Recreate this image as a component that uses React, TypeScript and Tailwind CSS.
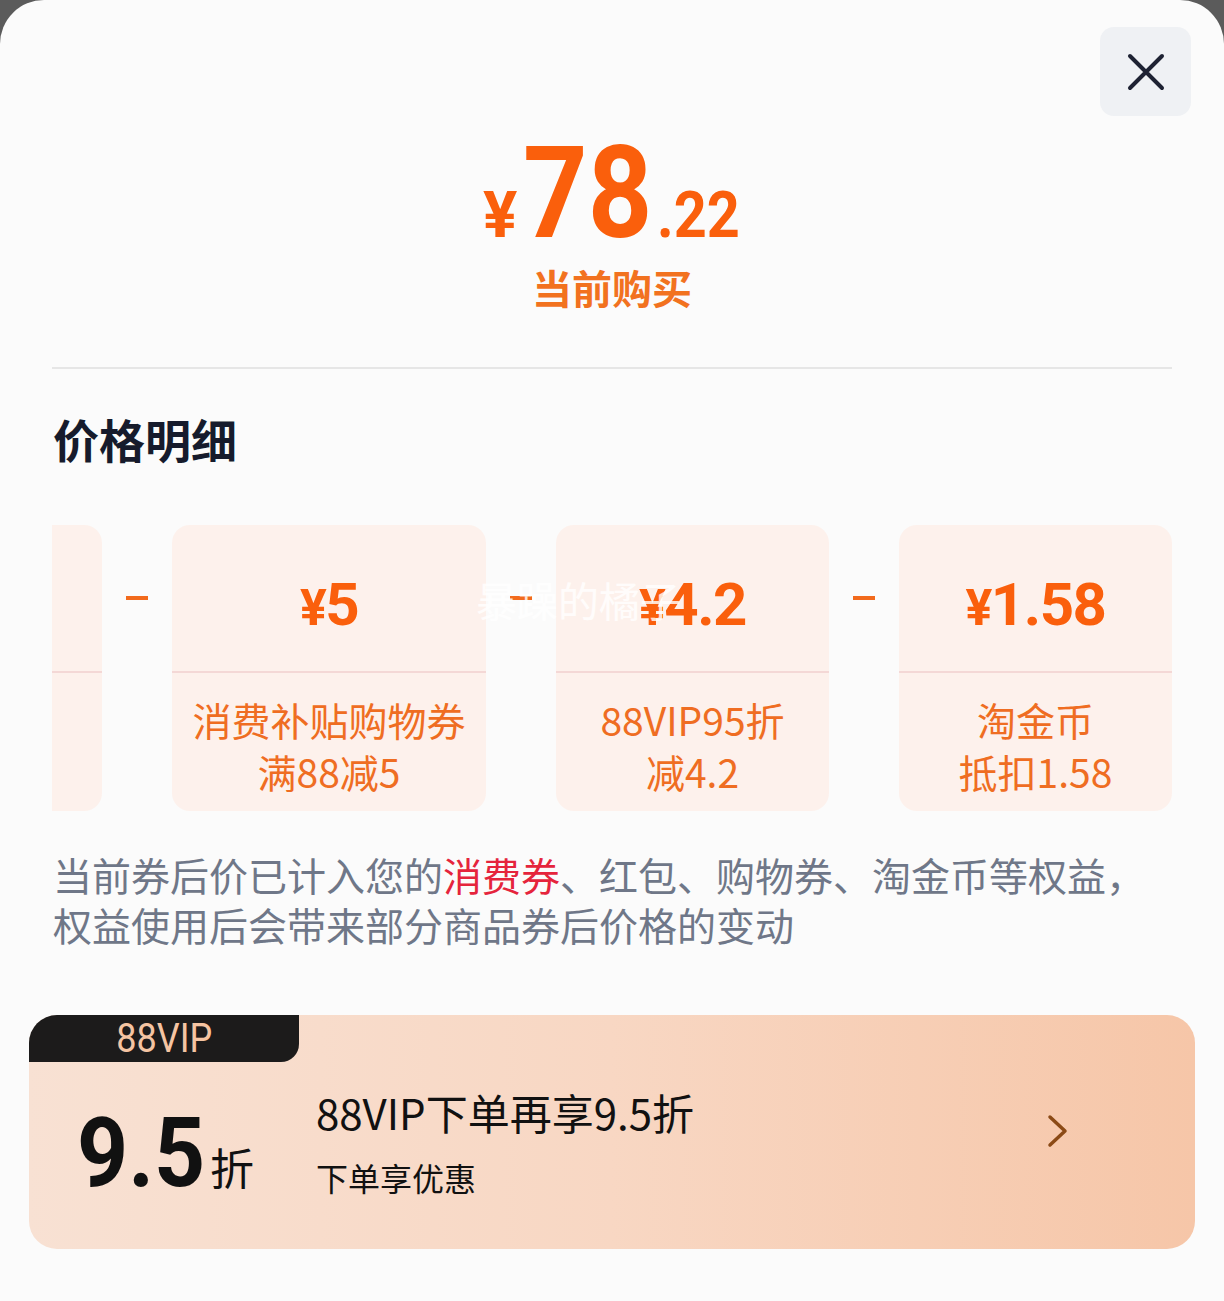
import React from 'react';

const cn = '"Noto Sans CJK SC", "Noto Sans", sans-serif';
const num = 'Roboto, "Noto Sans CJK SC", sans-serif';

type Item = { amount: string; line1: string; line2: string; wide?: boolean };

const items: Item[] = [
  { amount: '5', line1: '消费补贴购物券', line2: '满88减5', wide: true },
  { amount: '4.2', line1: '88VIP95折', line2: '减4.2' },
  { amount: '1.58', line1: '淘金币', line2: '抵扣1.58' },
];

function Dash() {
  return (
    <div className="flex h-full w-[70px] shrink-0 justify-center pt-[71px]">
      <div className="h-[4px] w-[22px] bg-[#f26a1c]" />
    </div>
  );
}

function Card({ item }: { item: Item }) {
  return (
    <div
      className={`flex h-[286px] shrink-0 flex-col rounded-[18px] bg-[#fdf1ec] ${
        item.wide ? 'w-[314px]' : 'w-[273px]'
      }`}
    >
      <div className="flex h-[148px] items-center justify-center border-b-2 border-[#f4d8d6] pt-[14px]">
        <span
          className="font-bold leading-none tracking-[-1.5px] text-[#fa5f0c]"
          style={{ fontFamily: num }}
        >
          <span className="text-[50px]">¥</span>
          <span className="text-[60px]">{item.amount}</span>
        </span>
      </div>
      <div
        className="flex flex-1 flex-col items-center pt-[20px] text-[39px] leading-[52px] text-[#ef6d22]"
        style={{ fontFamily: cn }}
      >
        <span>{item.line1}</span>
        <span>{item.line2}</span>
      </div>
    </div>
  );
}

export default function App() {
  return (
    <div className="min-h-[1301px] w-[1224px] bg-[#5b5b5b]">
      <div className="relative min-h-[1301px] rounded-t-[44px] bg-[#fbfbfb]" style={{ fontFamily: cn }}>
        {/* close */}
        <div className="flex justify-end px-[33px] pt-[27px]">
          <button className="flex h-[89px] w-[91px] items-center justify-center rounded-[14px] bg-[#eff1f4]">
            <svg width="40" height="40" viewBox="0 0 40 40" fill="none">
              <path d="M4 4L36 36M36 4L4 36" stroke="#1e2233" strokeWidth="4" strokeLinecap="round" />
            </svg>
          </button>
        </div>

        {/* price */}
        <div className="mt-[13px] flex flex-col items-center">
          <div className="flex items-baseline font-bold text-[#fa5f0c]" style={{ fontFamily: num }}>
            <span className="text-[64px] leading-none">¥</span>
            <span className="ml-[6px] -mr-[15px] inline-block origin-left scale-x-[0.88] text-[128px] leading-none">
              78
            </span>
            <span className="ml-[2px] -mr-[8px] inline-block origin-left scale-x-[0.9] text-[64px] leading-none">
              .22
            </span>
          </div>
          <div className="mt-[10px] text-[40px] font-bold leading-none text-[#f2721f]">当前购买</div>
        </div>

        <div className="mx-[52px] mt-[60px] h-[2px] bg-[#e6e6e6]" />

        <h2 className="ml-[53px] mt-[46px] text-[46px] font-bold leading-none text-[#161b2c]">价格明细</h2>

        {/* breakdown cards */}
        <div className="relative mx-[52px] mt-[64px] flex h-[286px] overflow-hidden">
          <div className="flex h-[286px] w-[50px] shrink-0 flex-col rounded-r-[18px] bg-[#fdf1ec]">
            <div className="h-[148px] border-b-2 border-[#f4d8d6]" />
          </div>
          <Dash />
          <Card item={items[0]} />
          <Dash />
          <Card item={items[1]} />
          <Dash />
          <Card item={items[2]} />
          <span className="pointer-events-none absolute left-[424px] top-[54px] text-[41px] leading-none text-white/80">
            暴躁的橘子
          </span>
        </div>

        {/* note */}
        <p className="mx-[53px] mt-[38px] text-[39px] leading-[50px] text-[#6f7788]">
          当前券后价已计入您的<span className="text-[#e5243c]">消费券</span>、红包、购物券、淘金币等权益，
          <br />
          权益使用后会带来部分商品券后价格的变动
        </p>

        {/* 88VIP banner */}
        <div className="mx-[29px] mt-[66px] h-[234px] overflow-hidden rounded-[28px] bg-gradient-to-r from-[#f8e1d3] via-[#f8d7c3] to-[#f6c6a8]">
          <div className="flex h-[47px] w-[270px] items-center justify-center rounded-br-[18px] bg-[#1c1b1b]">
            <span
              className="inline-block scale-x-[0.9] text-[40px] leading-none text-[#f5c4a2]"
              style={{ fontFamily: num }}
            >
              88VIP
            </span>
          </div>
          <div className="flex items-start pl-[48px] pr-[126px]">
            <div className="flex w-[239px] items-baseline pt-[43px]">
              <span
                className="-mr-[9px] inline-block origin-left scale-x-[0.93] text-[96px] font-bold leading-none text-[#111]"
                style={{ fontFamily: num }}
              >
                9.5
              </span>
              <span className="ml-[4px] text-[44px] leading-none text-[#111]">折</span>
            </div>
            <div className="flex flex-1 flex-col pt-[24px]">
              <span className="text-[42px] leading-[52px] text-[#111]">88VIP下单再享9.5折</span>
              <span className="mt-[23px] text-[32px] leading-none text-[#111]">下单享优惠</span>
            </div>
            <svg width="22" height="34" viewBox="0 0 22 34" fill="none" className="mt-[52px]">
              <path d="M3 3L18 17L3 31" stroke="#8b4a16" strokeWidth="3.5" strokeLinecap="round" strokeLinejoin="round" />
            </svg>
          </div>
        </div>
      </div>
    </div>
  );
}
